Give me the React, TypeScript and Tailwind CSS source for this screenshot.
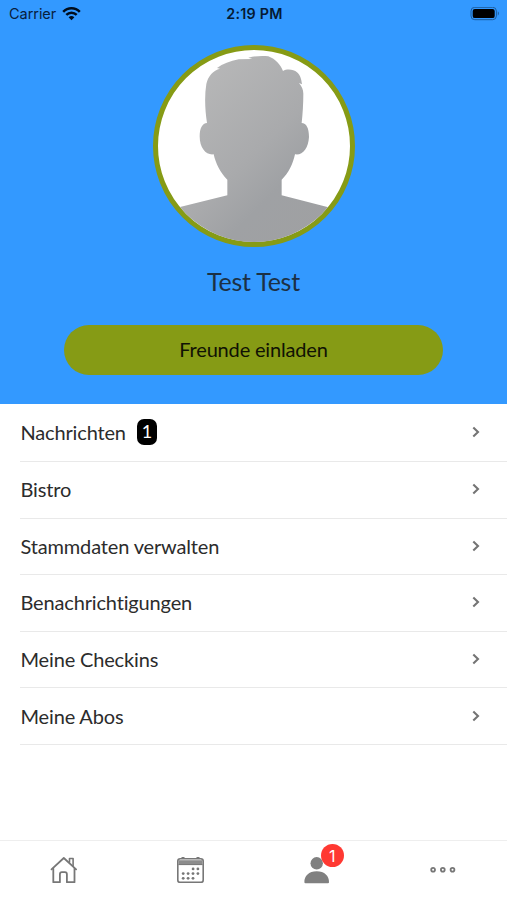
import React from 'react';

const menuItems = [
  { label: 'Nachrichten', badge: 1 },
  { label: 'Bistro' },
  { label: 'Stammdaten verwalten' },
  { label: 'Benachrichtigungen' },
  { label: 'Meine Checkins' },
  { label: 'Meine Abos' },
];

function StatusBar() {
  return (
    <div className="grid h-[27px] grid-cols-3 items-center pl-[9px] pr-[7px] font-['Inter'] text-[#08203c]">
      <div className="flex items-center gap-[6px]">
        <span className="text-[14.5px] leading-[27px] tracking-[-0.05px]">Carrier</span>
        <svg className="h-[14px] w-[19px]" viewBox="0 0 19 14" fill="none" stroke="#000d1c" strokeWidth="2.5">
          <path d="M1.2 4.8C5.8 .1 13.2 .1 17.8 4.8" />
          <path d="M4.3 7.9C7.2 5 11.8 5 14.7 7.9" />
          <path d="M9.5 13.3 6.6 10.2Q9.5 8 12.4 10.2Z" fill="#000d1c" stroke="none" />
        </svg>
      </div>
      <span className="text-center text-[14.3px] font-semibold leading-[27px] tracking-[0.25px] text-[#051a33]">2:19 PM</span>
      <svg className="h-[14px] w-[30px] justify-self-end" viewBox="0 0 30 14">
        <rect x="1" y=".3" width="25.4" height="12.4" rx="3.8" fill="none" stroke="#1d5c9c" strokeWidth="1" />
        <rect x="2.7" y="1.9" width="22" height="9.2" rx="2.2" fill="#000" />
        <path d="M27.8 4.3q2.2 2.2 0 4.4Z" fill="#1d5c9c" />
      </svg>
    </div>
  );
}

function Avatar() {
  return (
    <div className="h-[202px] w-[202px] overflow-hidden rounded-full border-[5px] border-[#869b15] bg-white">
      <svg className="h-full w-full overflow-visible" viewBox="24 30 576 576">
        <defs>
          <linearGradient id="silhouette" x1="0" y1="0" x2="1" y2="1">
            <stop offset="0" stopColor="#bdbdbd" />
            <stop offset="0.5" stopColor="#a9aaac" />
            <stop offset="0.65" stopColor="#9fa1a4" />
            <stop offset="1" stopColor="#a0a0a1" />
          </linearGradient>
        </defs>
        <path
          fill="url(#silhouette)"
          d="M20 524 90 501 232 466V419C211 399 197 370 191 343C169 346 149 326 149 289C149 264 157 250 171 249C165 209 163 169 169 132C174 108 190 91 210 86L201 84C218 72 240 63 266 58L307 57L295 53C315 48 336 47 355 49C377 58 391 73 399 93C411 86 431 88 441 97C452 107 454 119 456 133L447 129C455 139 460 149 460 161C460 192 458 220 455 249C469 249 477 264 477 291C475 326 457 347 435 343C429 371 416 400 395 419V466L535 502 610 524V630H20Z"
        />
      </svg>
    </div>
  );
}

function HomeIcon() {
  return (
    <svg className="h-[28px] w-[28px]" viewBox="0 0 28 28" fill="none" stroke="#777" strokeWidth="1.8" strokeLinejoin="round" strokeLinecap="round">
      <path d="M1.5 13.4 13.8 2 26.1 13.4" />
      <path d="M3.3 12.6V26.2H9.9V18.2Q9.9 16.2 11.9 16.2H14.9Q16.9 16.2 16.9 18.2V26.2H24.5V12.6" />
      <path d="M19.5 6.3V2.5H23.1V9.8" strokeWidth="1.6" />
    </svg>
  );
}

function CalendarIcon() {
  const dots = [
    [16.1, 12.9], [20.9, 12.9],
    [6.2, 17.6], [11.1, 17.6], [16, 17.6], [20.9, 17.6],
    [6.2, 22.3], [11.1, 22.3], [16, 22.3],
  ];

  return (
    <svg className="h-[28px] w-[28px]" viewBox="0 0 28 28" fill="none" stroke="#777" strokeWidth="1.6">
      <rect x="0.8" y="2.7" width="25.4" height="23.6" rx="2.4" />
      <path d="M1.5 4.2H25.5V8.8H1.5Z" fill="#8c8c8c" stroke="none" />
      <path d="M1.5 8.6H25.5" strokeWidth="1" />
      <path d="M4.5 1.6H7.5M19.5 1.6H22.5" strokeWidth="1.4" />
      {dots.map(([cx, cy]) => (
        <circle key={`${cx}-${cy}`} cx={cx} cy={cy} r="1.4" fill="#777" stroke="none" />
      ))}
    </svg>
  );
}

function ProfileIcon() {
  return (
    <div className="relative">
      <svg className="h-[28px] w-[28px]" viewBox="0 0 28 28" fill="#808080">
        <circle cx="13.7" cy="7.3" r="6.2" />
        <path d="M1.4 26.2C1.1 20 5.9 15.2 13.7 15.2S26.3 20 26 26.2Q26 27.2 25 27.2H2.4Q1.4 27.2 1.4 26.2Z" />
      </svg>
      <span className="absolute -top-[12px] left-[17.5px] flex h-[23px] w-[23px] items-center justify-center rounded-full bg-[#ff3932] font-['Inter'] text-[16px] leading-none text-white">
        1
      </span>
    </div>
  );
}

function MoreIcon() {
  return (
    <svg className="h-[28px] w-[28px]" viewBox="0 0 28 28" fill="none" stroke="#777" strokeWidth="1.8">
      <circle cx="3.1" cy="13.8" r="1.9" />
      <circle cx="12.8" cy="13.8" r="1.9" />
      <circle cx="22.5" cy="13.8" r="1.9" />
    </svg>
  );
}

export default function App() {
  return (
    <div className="flex h-[900px] w-[507px] flex-col overflow-hidden bg-white font-['Lato',sans-serif]">
      <header className="h-[404px] bg-[#3399ff]">
        <StatusBar />
        <div className="flex flex-col items-center pt-[18px]">
          <Avatar />
          <h1 className="mt-[18px] text-[25px] leading-[32px] tracking-[-0.25px] text-[#1c3044]">Test Test</h1>
          <button className="mt-[28px] h-[49.5px] w-[379px] rounded-full bg-[#869b15] pb-[2px] text-[20px] tracking-[-0.17px] text-[#101204]">
            Freunde einladen
          </button>
        </div>
      </header>

      <ul className="flex-1 pl-[20px]">
        {menuItems.map((item) => (
          <li
            key={item.label}
            className="flex h-[56.6px] items-center border-b border-[#e9e9e9] pb-[1px] pl-[0.5px] pr-[26px] text-[20px] tracking-[-0.16px] text-[#2c2c2c] first:h-[58px] first:pb-[2px]"
          >
            <span>{item.label}</span>
            {item.badge && (
              <span className="ml-[11px] flex h-[26px] w-[20px] items-center justify-center rounded-[7px] bg-black text-[18px] text-white">
                {item.badge}
              </span>
            )}
            <svg className="ml-auto h-[12px] w-[10px]" viewBox="0 0 10 12" fill="none" stroke="#747474" strokeWidth="2.1">
              <path d="M2.3 1.5 7 6 2.3 10.5" />
            </svg>
          </li>
        ))}
      </ul>

      <nav className="grid h-[60px] grid-cols-4 justify-items-center border-t border-[#eeeeee] pl-[1px] pt-[15px]">
        <HomeIcon />
        <CalendarIcon />
        <ProfileIcon />
        <MoreIcon />
      </nav>
    </div>
  );
}
